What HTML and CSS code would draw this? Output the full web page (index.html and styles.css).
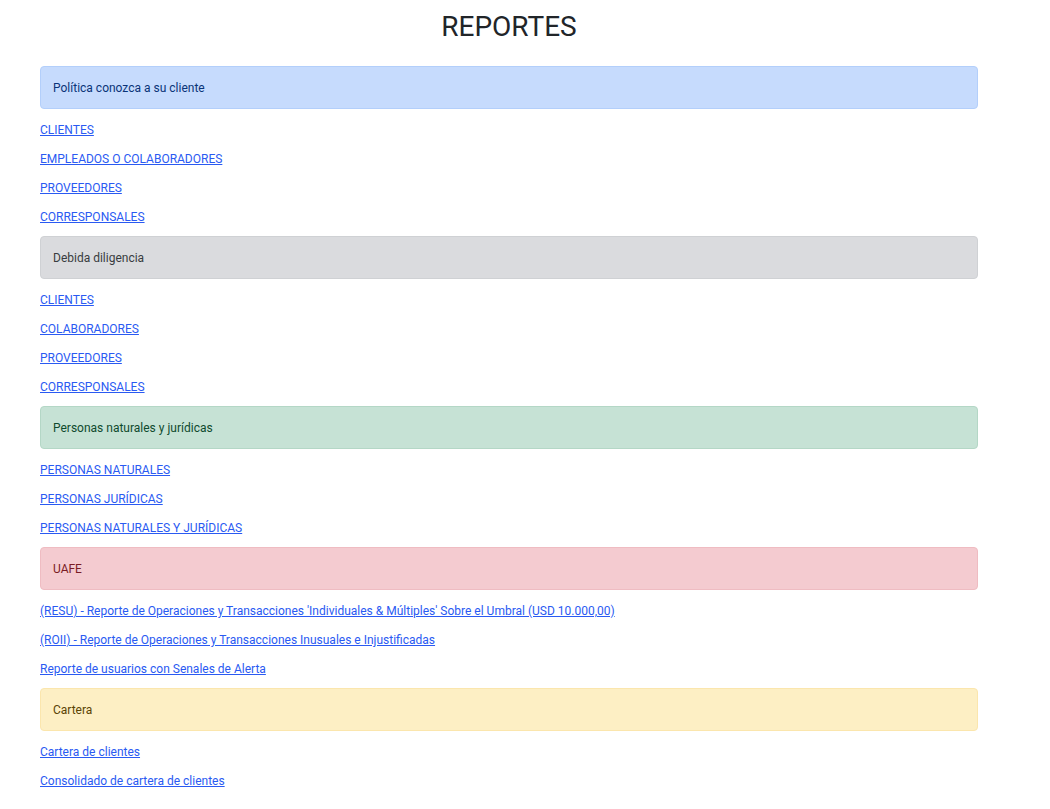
FILE: index.html
```html
<!DOCTYPE html>
<html lang="es">
<head>
<meta charset="utf-8">
<title>Reportes</title>
<link rel="stylesheet" href="styles.css">
</head>
<body>
<div class="container">
  <h1 class="title">REPORTES</h1>

  <div class="alert alert-primary">Política conozca a su cliente</div>
  <p><a href="#">CLIENTES</a></p>
  <p><a href="#">EMPLEADOS O COLABORADORES</a></p>
  <p><a href="#">PROVEEDORES</a></p>
  <p><a href="#">CORRESPONSALES</a></p>

  <div class="alert alert-secondary">Debida diligencia</div>
  <p><a href="#">CLIENTES</a></p>
  <p><a href="#">COLABORADORES</a></p>
  <p><a href="#">PROVEEDORES</a></p>
  <p><a href="#">CORRESPONSALES</a></p>

  <div class="alert alert-success">Personas naturales y jurídicas</div>
  <p><a href="#">PERSONAS NATURALES</a></p>
  <p><a href="#">PERSONAS JURÍDICAS</a></p>
  <p><a href="#">PERSONAS NATURALES Y JURÍDICAS</a></p>

  <div class="alert alert-danger">UAFE</div>
  <p><a href="#">(RESU) - Reporte de Operaciones y Transacciones 'Individuales &amp; Múltiples' Sobre el Umbral (USD 10.000,00)</a></p>
  <p><a href="#">(ROII) - Reporte de Operaciones y Transacciones Inusuales e Injustificadas</a></p>
  <p><a href="#">Reporte de usuarios con Senales de Alerta</a></p>

  <div class="alert alert-warning">Cartera</div>
  <p><a href="#">Cartera de clientes</a></p>
  <p><a href="#">Consolidado de cartera de clientes</a></p>
</div>
</body>
</html>
```

FILE: styles.css
```css
html, body {
  margin: 0;
  padding: 0;
  background: #ffffff;
}
body {
  font-family: Roboto, "Liberation Sans", Arial, sans-serif;
  font-size: 12px;
  line-height: 18px;
  color: #212529;
}
.container {
  width: 938px;
  margin-left: 40px;
  padding-top: 9px;
}
.title {
  margin: 0 0 22px 0;
  text-align: center;
  font-size: 28px;
  font-weight: 400;
  line-height: 35px;
  color: #212529;
}
.alert {
  padding: 13px 12px 11px 12px;
  line-height: 17px;
  border: 1px solid transparent;
  border-radius: 4px;
  margin-bottom: 11px;
}
.alert-primary { background: #c6dbfd; border-color: #b3cffb; color: #0a3478; }
.alert-secondary { background: #dadbde; border-color: #cfd1d4; color: #383c40; }
.alert-success { background: #c6e2d5; border-color: #b4d7c6; color: #0f4a2e; }
.alert-danger { background: #f4cbd0; border-color: #efbcc2; color: #7a1c25; }
.alert-warning { background: #fdefc4; border-color: #fbe6ad; color: #5a4404; }
p {
  margin: 0 0 10px 0;
  padding-top: 1px;
}
a {
  color: #2a5af2;
  text-decoration: underline;
}
```
